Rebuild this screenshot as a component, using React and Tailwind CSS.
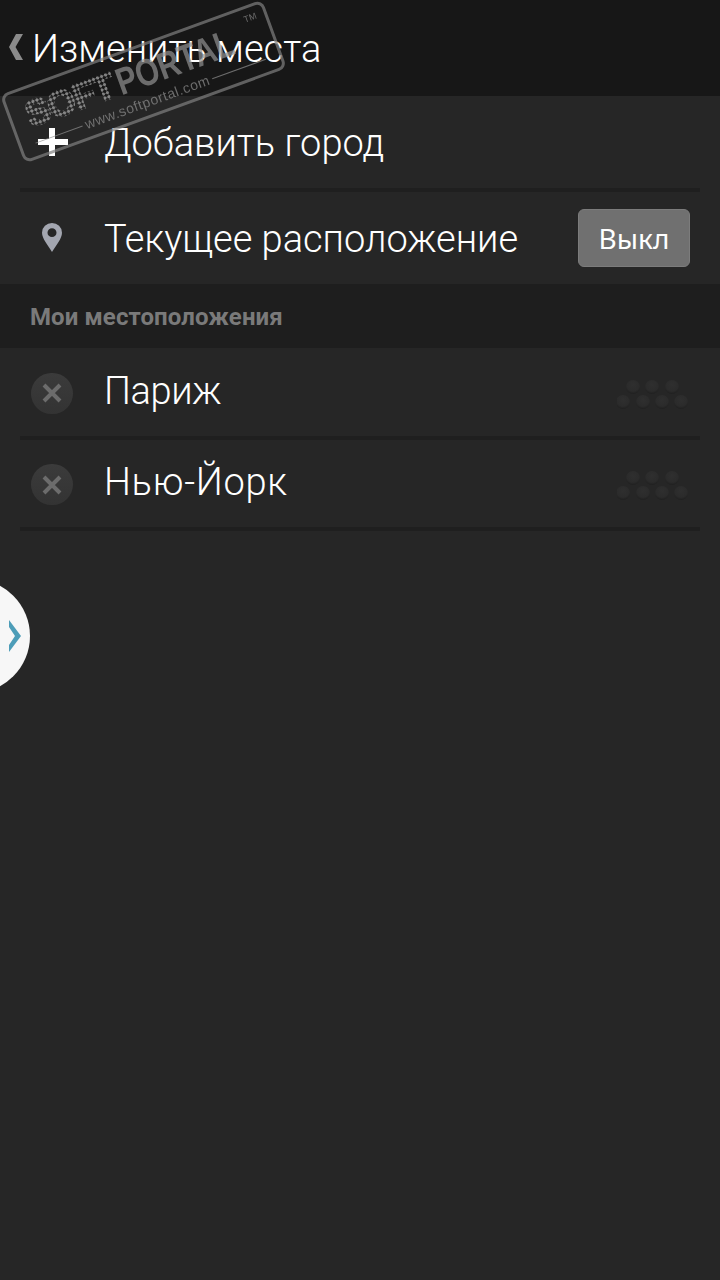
const font = { fontFamily: 'Roboto, sans-serif' };

function Dots() {
  return (
    <svg width="72" height="30" viewBox="0 0 72 30" className="shrink-0 mt-[3px]">
      <defs>
        <radialGradient id="dot" cx="50%" cy="35%" r="65%">
          <stop offset="0%" stopColor="#2f2f2f" />
          <stop offset="70%" stopColor="#2b2b2b" />
          <stop offset="100%" stopColor="#1f1f1f" />
        </radialGradient>
      </defs>
      {[16, 35, 55].map(x => <circle key={x} cx={x} cy="8" r="7" fill="url(#dot)" />)}
      {[6, 26, 45, 64].map(x => <circle key={x} cx={x} cy="23" r="7" fill="url(#dot)" />)}
    </svg>
  );
}

function RemoveIcon() {
  return (
    <div className="w-[42px] h-[41px] mt-[2px] rounded-full bg-linear-to-b from-[#3b3b3b] to-[#333333] flex items-center justify-center">
      <svg width="20" height="20" viewBox="0 0 20 20">
        <path d="M2 2 18 18M18 2 2 18" stroke="#6c6c6c" strokeWidth="4" />
      </svg>
    </div>
  );
}

function City({ name, height, text }) {
  return (
    <div className={`flex flex-col ${height}`}>
      <div className="flex-1 flex items-center pl-[31px] pr-[31px]">
        <RemoveIcon />
        <span className={`ml-[31px] flex-1 text-[38px] font-light text-white ${text}`}>{name}</span>
        <Dots />
      </div>
      <div className="mx-5 h-[4px] bg-[#1f1f1f]" />
    </div>
  );
}

function Watermark() {
  return (
    <div className="absolute left-[4px] top-[45px] w-[279px] h-[73px] -rotate-[20deg] border-[3px] border-[#808080] rounded-lg opacity-70 pointer-events-none text-[#909090]" style={{ fontFamily: '"Liberation Sans", sans-serif' }}>
      <div className="flex pl-[15px] pt-[8px] h-[46px]">
        <span className="w-[96px] font-bold text-[36px] leading-[36px] tracking-[-1px] text-transparent bg-clip-text [-webkit-text-stroke:2px_transparent] bg-[radial-gradient(circle,#b0b0b0_1.6px,transparent_1.9px)] bg-[length:4.3px_4.3px]">SOFT</span>
        <span className="font-bold text-[38px] leading-[36px] origin-left scale-x-[0.8]">PORTAL</span>
      </div>
      <div className="flex items-center pl-[14px] pr-[14px] gap-[3px] text-[14px] leading-4 tracking-[0.6px]">
        <div className="w-[50px] h-px bg-[#909090]" />
        <span>www.softportal.com</span>
        <div className="flex-1 h-px bg-[#909090]" />
      </div>
      <span className="absolute right-[8px] top-[5px] text-[9px] leading-[10px]">TM</span>
    </div>
  );
}

export default function App() {
  return (
    <div className="relative w-[720px] h-[1280px] overflow-hidden bg-[#262626]" style={font}>
      {/* Header */}
      <div className="h-[96px] bg-[#171717] flex items-center pl-[6px]">
        <svg width="20" height="28" viewBox="0 0 20 28" className="-mt-[3px]">
          <path d="M10 1h7L9.500 14 17 27h-7L3 14Z" fill="#8b8b8b" />
        </svg>
        <span className="ml-[6px] mt-[2px] text-[38px] font-light text-white">Изменить места</span>
      </div>

      {/* Add city */}
      <div className="h-[96px] flex flex-col">
        <div className="flex-1 flex items-center pl-[38px]">
          <svg width="30" height="28" viewBox="0 0 30 28">
            <path d="M11 0h6v11h13v6H17v11h-6V17H0v-6h11Z" fill="#fff" />
          </svg>
          <span className="ml-[36px] mt-[2px] text-[38px] font-light text-white">Добавить город</span>
        </div>
        <div className="mx-5 h-[4px] bg-[#1f1f1f]" />
      </div>

      {/* Current location */}
      <div className="h-[92px] flex items-center pl-[42px] pr-[30px]">
        <svg width="20" height="29" viewBox="0 0 20 30" preserveAspectRatio="none" className="-mt-[1px]">
          <path fillRule="evenodd" d="M10 0a10 10 0 0 1 10 10c0 6-6 13-10 20C6 23 0 16 0 10A10 10 0 0 1 10 0Zm0 5.500a4.500 4.500 0 1 0 0 9 4.500 4.500 0 0 0 0-9Z" fill="#a3a6b0" />
        </svg>
        <span className="ml-[42px] mt-[2px] flex-1 text-[38px] font-light text-white">Текущее расположение</span>
        <div className="w-[112px] h-[58px] rounded-md bg-[#707070] border border-[#7c7c7c] flex items-center justify-center text-[28px] text-white" style={{ fontFamily: '"Noto Sans", sans-serif' }}>Выкл</div>
      </div>

      {/* Section */}
      <div className="h-[64px] bg-[#1e1e1e] flex items-center pl-[30px] pt-[2px] text-[24px] font-bold tracking-[0.1px] text-[#7a7a7a]">Мои местоположения</div>

      <City name="Париж" height="h-[92px]" text="tracking-[-0.4px] mb-[2px]" />
      <City name="Нью-Йорк" height="h-[91px]" text="tracking-[0.7px] mb-[3px]" />

      <Watermark />

      {/* Side handle */}
      <div className="absolute left-[-84px] top-[579px] w-[114px] h-[114px] rounded-full bg-[#f7f7f7] flex items-center justify-end pr-[9px]">
        <svg width="12" height="32" viewBox="0 0 12 32">
          <path d="M0 0 12 16 0 32V25L6 16 0 7Z" fill="#4d9db8" />
        </svg>
      </div>
    </div>
  );
}
